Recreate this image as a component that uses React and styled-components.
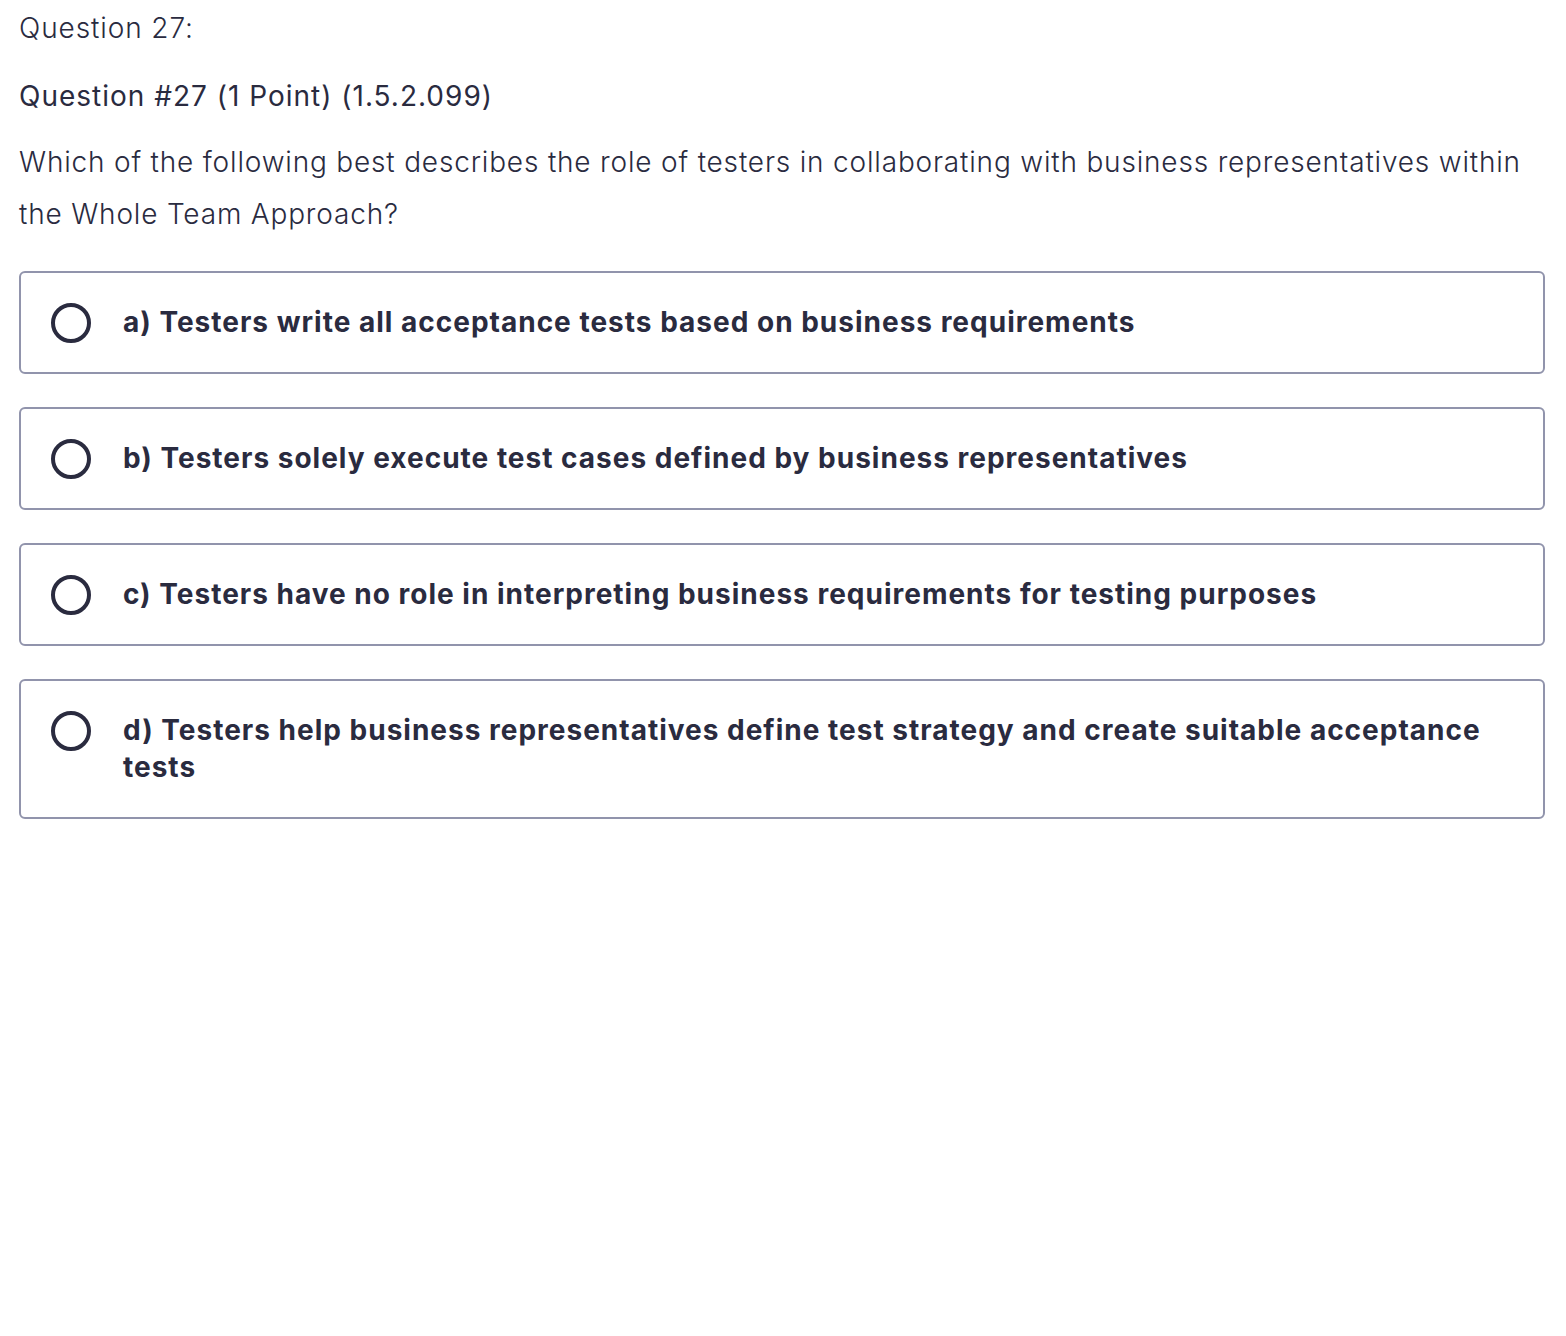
import React from 'react';
import styled, { createGlobalStyle } from 'styled-components';

const GlobalStyle = createGlobalStyle`
    html, body {
        margin: 0;
        padding: 0;
        background: #ffffff;
    }
    body {
        font-family: Inter, "Noto Sans", sans-serif;
        color: #2a2b3f;
    }
`;

const Page = styled.div`
    padding: 8px 21px 0 19px;
`;

const Heading = styled.div`
    font-size: 28px;
    font-weight: 300;
    line-height: 40px;
    letter-spacing: 0.9px;
    margin-bottom: 28px;
`;

const SubHeading = styled.div`
    font-size: 28px;
    font-weight: 400;
    line-height: 40px;
    letter-spacing: 1px;
    margin-bottom: 20px;
`;

const Prompt = styled.p`
    font-size: 28px;
    font-weight: 300;
    line-height: 52px;
    letter-spacing: 0.82px;
    margin: 0 0 31px;
`;

const OptionList = styled.div`
    display: flex;
    flex-direction: column;
    gap: 33px;
`;

const Option = styled.label`
    display: flex;
    align-items: flex-start;
    gap: 32px;
    border: 2px solid #9194ac;
    border-radius: 6px;
    padding: 31px 30px;
    cursor: pointer;
`;

const Radio = styled.span`
    flex: none;
    box-sizing: border-box;
    width: 40px;
    height: 40px;
    margin: -1px 0 -2px;
    border: 4px solid #2a2b3f;
    border-radius: 50%;
`;

const OptionText = styled.span`
    font-size: 28px;
    font-weight: 700;
    line-height: 37px;
    letter-spacing: 1px;
`;

const options = [
    'a) Testers write all acceptance tests based on business requirements',
    'b) Testers solely execute test cases defined by business representatives',
    'c) Testers have no role in interpreting business requirements for testing purposes',
    'd) Testers help business representatives define test strategy and create suitable acceptance tests',
];

const App = () => {
    return (
        <Page>
            <GlobalStyle />
            <Heading>Question 27:</Heading>
            <SubHeading>Question #27 (1 Point) (1.5.2.099)</SubHeading>
            <Prompt>
                Which of the following best describes the role of testers in collaborating with business
                representatives within the Whole Team Approach?
            </Prompt>
            <OptionList>
                {options.map((text) => (
                    <Option key={text}>
                        <Radio />
                        <OptionText>{text}</OptionText>
                    </Option>
                ))}
            </OptionList>
        </Page>
    );
};

export default App;
